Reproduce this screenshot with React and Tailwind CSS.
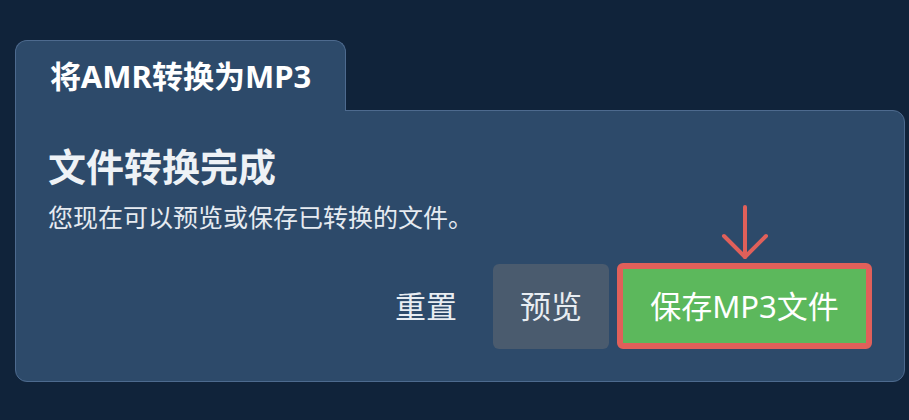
import { useState } from 'react';

const FONT = { fontFamily: '"Noto Sans", "Noto Sans CJK SC", sans-serif' };

// red pointer drawn above the save button
function DownArrow() {
  return (
    <svg width="50" height="56" viewBox="0 0 50 56" fill="none" stroke="#e0605a" strokeWidth="4" strokeLinecap="round" strokeLinejoin="round">
      <path d="M25 3 L25 53" />
      <path d="M4 32 L25 53 L46 32" />
    </svg>
  );
}

export default function App() {
  const [previewing, setPreviewing] = useState(false);

  return (
    <div className="min-h-screen bg-[#10233a] pt-10 pl-[15px] pr-1 pb-6" style={FONT}>
      <div className="relative z-10 -mb-px w-[331px] h-[71px] flex items-center justify-center bg-[#2d4a6a] border-t border-x border-[#4d6a8e] rounded-t-xl">
        <span className="text-[31px] font-bold text-white leading-none">将AMR转换为MP3</span>
      </div>

      <div className="bg-[#2d4a6a] border border-[#4d6a8e] rounded-b-xl rounded-tr-xl pl-8 pr-8 pt-9 pb-8">
        <h2 className="text-[38px] font-bold text-[#eef2f6] leading-none">文件转换完成</h2>
        <p className="mt-5 text-[25px] text-[#e6ebf1] leading-none">您现在可以预览或保存已转换的文件。</p>

        <div className="mt-[33px] flex items-center justify-end gap-2">
          <button className="h-[85px] px-7 text-[31px] text-[#e8edf2] leading-none">重置</button>
          <button
            onClick={() => setPreviewing(!previewing)}
            className="h-[85px] w-[116px] rounded-md bg-[#4a5b6e] text-[31px] text-[#e8edf2] leading-none"
          >
            预览
          </button>
          <div className="relative">
            <div className="absolute left-1/2 -translate-x-1/2 -top-[59px]">
              <DownArrow />
            </div>
            <button className="h-[86px] w-[255px] rounded-md border-[6px] border-[#e0605a] bg-[#5cb85c] text-[31px] text-white leading-none">
              保存MP3文件
            </button>
          </div>
        </div>
      </div>
    </div>
  );
}
